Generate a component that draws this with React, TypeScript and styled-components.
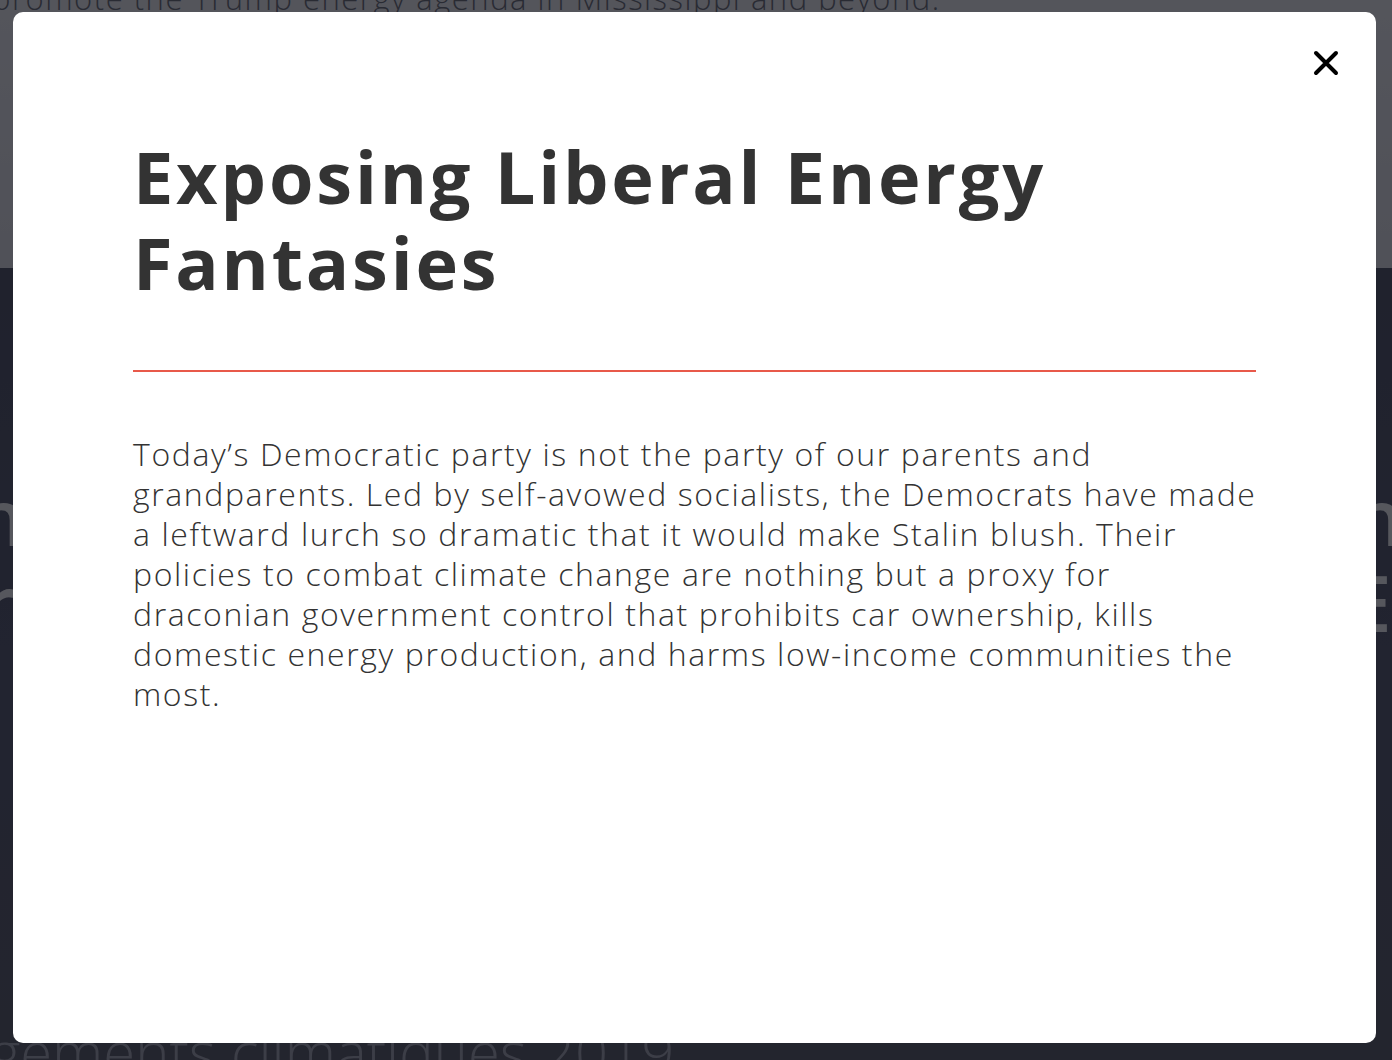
import React from "react";
import styled, { createGlobalStyle } from "styled-components";

const Global = createGlobalStyle`
  html, body { margin: 0; padding: 0; height: 100%; overflow: hidden; }
  body { background: #2e3240; font-family: "Open Sans", "Liberation Sans", sans-serif; }
  #root { height: 100%; }
`;

const Page = styled.div`
  height: 100%;
  display: flex;
  flex-direction: column;
  overflow: hidden;
`;

const LightSection = styled.section`
  height: 268px;
  flex: none;
  background: linear-gradient(180deg, #f6f6f8 0%, #e6e6ea 100%);
  overflow: hidden;
`;

const Lead = styled.p`
  margin: -22px 0 0 -8px;
  font-family: "Open Sans", sans-serif;
  font-weight: 300;
  font-size: 31px;
  line-height: 40px;
  letter-spacing: 1.5px;
  color: #50525c;
  white-space: nowrap;
`;

const Hero = styled.section`
  flex: 1;
  background: linear-gradient(180deg, #2c3044 0%, #343850 55%, #3a3c48 100%);
  display: flex;
  flex-direction: column;
  overflow: hidden;
`;

const HeroTitle = styled.h1`
  margin: 205px 0 0 0;
  font-family: "Open Sans", sans-serif;
  font-weight: 600;
  font-size: 78px;
  line-height: 86px;
  color: #ffffff;
  white-space: nowrap;
  text-align: center;
  display: flex;
  flex-direction: column;
  align-items: center;
`;

const HeroFoot = styled.p`
  margin: auto 0 -24px -137px;
  font-family: "Open Sans", sans-serif;
  font-weight: 300;
  font-size: 58px;
  line-height: 64px;
  color: #9a9ca8;
  white-space: nowrap;
`;

const Overlay = styled.div`
  position: fixed;
  inset: 0;
  background: rgba(28, 30, 38, 0.745);
  padding: 12px 17px 17px 13px;
  box-sizing: border-box;
  display: flex;
`;

const Modal = styled.div`
  flex: 1;
  background: #ffffff;
  border-radius: 10px;
  padding: 31px 120px 0 120px;
  display: flex;
  flex-direction: column;
  position: relative;
`;

const CloseButton = styled.button`
  position: absolute;
  top: 27px;
  right: 26px;
  width: 48px;
  height: 48px;
  border: 0;
  background: transparent;
  padding: 0;
  cursor: pointer;
  display: flex;
  align-items: center;
  justify-content: center;
`;

const Title = styled.h2`
  margin: 90px 0 0 0;
  font-family: "Open Sans", sans-serif;
  font-weight: 700;
  font-size: 72px;
  line-height: 86px;
  letter-spacing: 2.8px;
  color: #333333;
`;

const Divider = styled.hr`
  margin: 65px 0 0 0;
  border: 0;
  height: 2px;
  background: #e8594a;
`;

const Body = styled.p`
  margin: 62px 0 0 0;
  font-family: "Open Sans", sans-serif;
  font-weight: 300;
  font-size: 32px;
  line-height: 40px;
  letter-spacing: 1.6px;
  color: #333333;
`;

const Line = styled.span`
  display: block;
  white-space: nowrap;
`;

const bodyLines = [
  "Today’s Democratic party is not the party of our parents and",
  "grandparents. Led by self-avowed socialists, the Democrats have made",
  "a leftward lurch so dramatic that it would make Stalin blush. Their",
  "policies to combat climate change are nothing but a proxy for",
  "draconian government control that prohibits car ownership, kills",
  "domestic energy production, and harms low-income communities the",
  "most.",
];

export default function App() {
  return (
    <>
      <Global />
      <Page>
        <LightSection>
          <Lead>promote the Trump energy agenda in Mississippi and beyond.</Lead>
        </LightSection>
        <Hero>
          <HeroTitle>
            <span>Protecting our energy future, Mississippi to the nation</span>
            <span>Affordable energy for every family in AMERICA</span>
          </HeroTitle>
          <HeroFoot>Engagements climatiques 2019</HeroFoot>
        </Hero>
      </Page>
      <Overlay>
        <Modal role="dialog" aria-modal="true">
          <CloseButton aria-label="Close">
            <svg width="26" height="26" viewBox="0 0 26 26">
              <path d="M3 3 L23 23 M23 3 L3 23" stroke="#000" strokeWidth="4" strokeLinecap="round" />
            </svg>
          </CloseButton>
          <Title>
            Exposing Liberal Energy
            <br />
            Fantasies
          </Title>
          <Divider />
          <Body>
            {bodyLines.map((l) => (
              <Line key={l}>{l}</Line>
            ))}
          </Body>
        </Modal>
      </Overlay>
    </>
  );
}
